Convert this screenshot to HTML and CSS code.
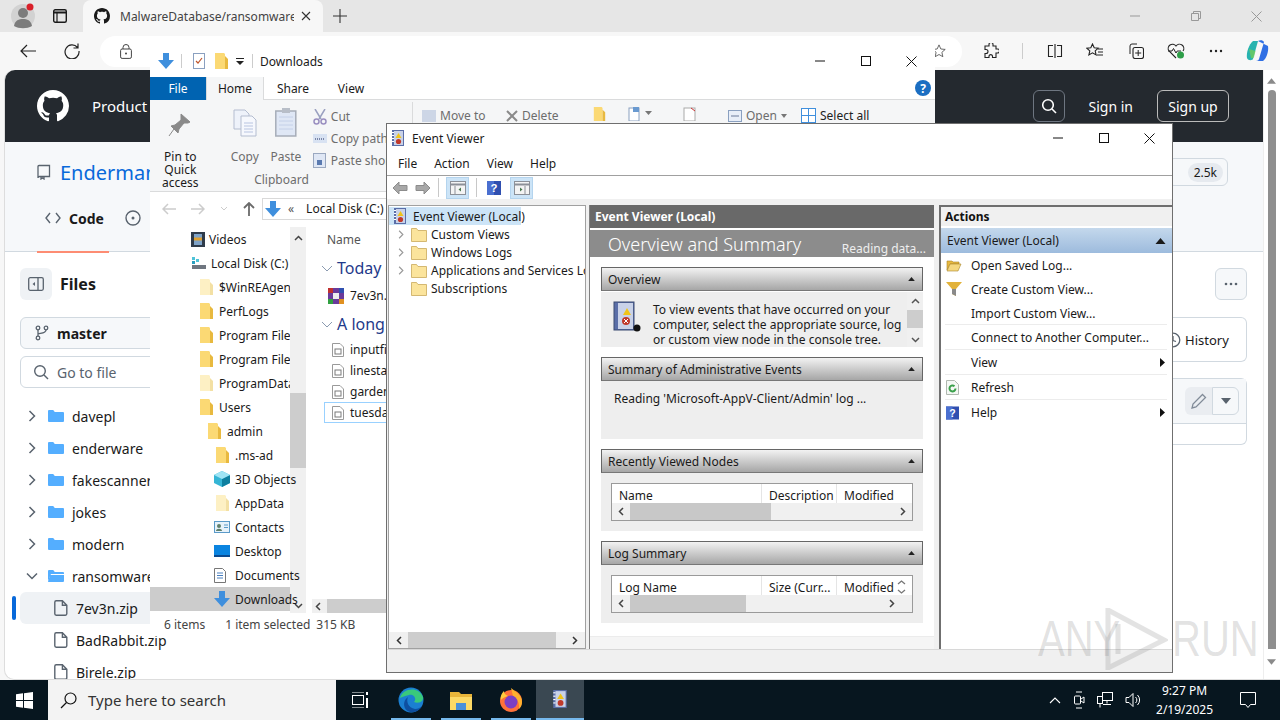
FILE: index.html
```html
<!DOCTYPE html>
<html>
<head>
  <title>Event Viewer</title>
  <link rel="stylesheet" href="styles.css">
</head>

<body>
  <svg class="sprite" width="0" height="0">
    <symbol id="gh" viewBox="0 0 16 16"><path fill="currentColor" d="M8 0C3.58 0 0 3.58 0 8c0 3.54 2.29 6.53 5.47 7.59.4.07.55-.17.55-.38 0-.19-.01-.82-.01-1.49-2.01.37-2.53-.49-2.69-.94-.09-.23-.48-.94-.82-1.13-.28-.15-.68-.52-.01-.53.63-.01 1.08.58 1.23.82.72 1.21 1.87.87 2.33.66.07-.52.28-.87.51-1.07-1.78-.2-3.64-.89-3.64-3.95 0-.87.31-1.59.82-2.15-.08-.2-.36-1.02.08-2.12 0 0 .67-.21 2.2.82.64-.18 1.32-.27 2-.27.68 0 1.36.09 2 .27 1.53-1.04 2.2-.82 2.2-.82.44 1.1.16 1.92.08 2.12.51.56.82 1.27.82 2.15 0 3.07-1.87 3.75-3.65 3.95.29.25.54.73.54 1.48 0 1.07-.01 1.93-.01 2.2 0 .21.15.46.55.38A8.013 8.013 0 0016 8c0-4.42-3.58-8-8-8z"/></symbol>
    <symbol id="bluefolder" viewBox="0 0 16 16"><path fill="#54aeff" d="M0 3a1 1 0 0 1 1-1h4.2l1.6 2H15a1 1 0 0 1 1 1v8a1 1 0 0 1-1 1H1a1 1 0 0 1-1-1z"/></symbol>
    <symbol id="openfolder" viewBox="0 0 16 16"><path fill="#54aeff" d="M0 3a1 1 0 0 1 1-1h4.2l1.6 2H15a1 1 0 0 1 1 1v1H3L0 13z"/><path fill="#54aeff" d="M2 7h14v6a1 1 0 0 1-1 1H1a1 1 0 0 1-1-.5z"/></symbol>
    <symbol id="ghfile" viewBox="0 0 14 16"><path fill="none" stroke="#59636e" stroke-width="1.4" d="M2.2.8h6.2l4.4 4.4v8.6a1.4 1.4 0 0 1-1.4 1.4H2.2A1.4 1.4 0 0 1 .8 13.8V2.2A1.4 1.4 0 0 1 2.2.8zM8.4.8v4.4h4.4"/></symbol>
    <symbol id="ydir" viewBox="0 0 13 16"><path fill="#fbd974" d="M0 0h9l1 1v15H0z"/><path fill="#e8b93f" d="M10 3l3 3v10h-3z"/></symbol>
    <symbol id="ydirpale" viewBox="0 0 13 16"><path fill="#fdf0c4" d="M0 0h9l1 1v15H0z"/><path fill="#f3e0a4" d="M10 3l3 3v10h-3z"/></symbol>
    <symbol id="dl" viewBox="0 0 16 16"><path fill="#3f8fdd" d="M5 0h6v7h5l-8 9-8-9h5z"/></symbol>
    <symbol id="ev" viewBox="0 0 16 16"><rect x="2" y="0" width="12" height="16" fill="#5a6ea8"/><rect x="4" y="1" width="9" height="14" fill="#c9d2e8"/><path fill="#f0c419" d="M8.5 3l3 5h-6z"/><circle cx="8.5" cy="11.5" r="2.6" fill="#c0392b"/><rect x="2" y="2" width="2" height="1" fill="#fff"/><rect x="2" y="5" width="2" height="1" fill="#fff"/><rect x="2" y="8" width="2" height="1" fill="#fff"/><rect x="2" y="11" width="2" height="1" fill="#fff"/></symbol>
    <symbol id="help" viewBox="0 0 16 16"><rect width="16" height="16" fill="#2f4fb0"/><rect width="8" height="16" fill="#4a6fd0"/><text x="8" y="13" text-anchor="middle" fill="#fff" font-size="13" font-weight="700" font-family="Liberation Sans">?</text></symbol>
    <symbol id="nodefolder" viewBox="0 0 16 16"><path fill="#fbe49c" stroke="#c9a95a" stroke-width=".8" d="M.5 2.5h5l1.5 2h8.500v11H.5z"/></symbol>
    <symbol id="rowdoc" viewBox="0 0 12 14"><path fill="#fff" stroke="#9a9a9a" d="M.5.5h7.500l3.500 3.500v9.500H.5z"/><rect x="3" y="6" width="6" height="5" fill="#fff" stroke="#7a7a7a"/></symbol>
    <symbol id="tri" viewBox="0 0 10 6"><path fill="currentColor" d="M5 0l5 6H0z"/></symbol>
    <symbol id="chev" viewBox="0 0 8 12"><path fill="none" stroke="currentColor" stroke-width="1.500" d="M1.500 1l5 5-5 5"/></symbol>
  </svg>

  <div class="browser">
    <div class="tabstrip">
      <div class="profile">
        <svg width="26" height="26" viewBox="0 0 26 26"><circle cx="13" cy="13" r="12" fill="#d2d2d2"/><circle cx="13" cy="10" r="5" fill="#7c7c7c"/><path fill="#7c7c7c" d="M4 23c1-6 5-7 9-7s8 1 9 7c-5 3-13 3-18 0z"/><circle cx="20" cy="4" r="3.500" fill="#d9202a"/></svg>
      </div>
      <svg class="tablist" width="14" height="14" viewBox="0 0 14 14"><rect x=".7" y=".7" width="12.600" height="12.600" rx="1.500" fill="none" stroke="#1a1a1a" stroke-width="1.400"/><path d="M.7 3.500h12.600" stroke="#1a1a1a" stroke-width="2"/><path d="M4 3v10" stroke="#1a1a1a" stroke-width="1.200"/></svg>
      <div class="tab">
        <svg class="tab-gh" width="16" height="16"><use href="#gh"/></svg>
        <span class="tab-title">MalwareDatabase/ransomwares/</span>
        <svg width="10" height="10" viewBox="0 0 10 10"><path d="M1 1l8 8M9 1l-8 8" stroke="#333" stroke-width="1.100"/></svg>
      </div>
      <svg class="newtab" width="14" height="14" viewBox="0 0 14 14"><path d="M7 0v14M0 7h14" stroke="#333" stroke-width="1.100"/></svg>
      <div class="winbtns">
        <svg width="10" height="10" viewBox="0 0 10 10"><path d="M0 5h10" stroke="#999"/></svg>
        <svg width="10" height="10" viewBox="0 0 10 10"><path d="M.5 2.500h7v7h-7zM2.500 2.500v-2h7v7h-2" fill="none" stroke="#999"/></svg>
        <svg width="11" height="11" viewBox="0 0 11 11"><path d="M.5.5l10 10M10.500.5l-10 10" stroke="#999"/></svg>
      </div>
    </div>

    <div class="toolbar">
      <svg class="tb-back" width="16" height="14" viewBox="0 0 16 14"><path d="M16 7H1M7 1L1 7l6 6" fill="none" stroke="#222" stroke-width="1.200"/></svg>
      <svg class="tb-reload" width="16" height="16" viewBox="0 0 16 16"><path d="M13.500 4.500A7 7 0 1 0 15 8M14 .5v4.500H9.500" fill="none" stroke="#222" stroke-width="1.200"/></svg>
      <div class="addressbar">
        <svg width="12" height="15" viewBox="0 0 12 15"><rect x=".6" y="5" width="10.800" height="9.400" rx="1.500" fill="none" stroke="#444"/><path d="M3 5V3.500a3 3 0 0 1 6 0V5" fill="none" stroke="#444"/><circle cx="6" cy="9.500" r="1" fill="#444"/></svg>
        <svg class="star" width="14" height="14" viewBox="0 0 16 16"><path d="M8 1l2.100 4.700 5 .5-3.800 3.300 1.100 5L8 12l-4.400 2.500 1.100-5L.9 6.200l5-.5z" fill="none" stroke="#555"/></svg>
      </div>
      <div class="tb-icons">
        <svg width="16" height="16" viewBox="0 0 16 16"><path d="M6 1.500a2 2 0 0 1 4 0V3h3v3h1.500a2 2 0 0 1 0 4H13v4.500H9.500V13a1.800 1.800 0 0 0-3.500 0v1.500H2V10.500h1a2 2 0 0 0 0-4H2V3h4z" fill="none" stroke="#222" stroke-width="1.100"/></svg>
        <i class="tb-sep"></i>
        <svg width="16" height="14" viewBox="0 0 16 14"><path d="M8 0v14M6 1.500H1.500v11H6M10 1.500h4.500v11H10" fill="none" stroke="#222" stroke-width="1.100"/></svg>
        <svg width="18" height="16" viewBox="0 0 18 16"><path d="M6.500 1l1.700 3.800 4 .4-3 2.700.9 4-3.600-2.100-3.600 2.100.9-4-3-2.700 4-.4z" fill="none" stroke="#222" stroke-width="1.100"/><path d="M12 6h5M12 9h5M11 12h6" stroke="#222"/></svg>
        <svg width="16" height="16" viewBox="0 0 16 16"><path d="M2 11V3a2 2 0 0 1 2-2h5" fill="none" stroke="#222"/><rect x="5" y="4.500" width="10.500" height="11" rx="2" fill="none" stroke="#222" stroke-width="1.100"/><path d="M10.200 7v6M7.200 10h6" stroke="#222"/></svg>
        <svg width="18" height="16" viewBox="0 0 18 16"><path d="M9 15L2 8a4 4 0 0 1 7-5 4 4 0 0 1 7 5" fill="none" stroke="#222" stroke-width="1.100"/><path d="M1 8h4l1.500-2.500L9 10l1.200-2H14" fill="none" stroke="#222"/><circle cx="13.500" cy="12" r="3.500" fill="#2e9e48"/></svg>
        <svg width="14" height="4" viewBox="0 0 14 4"><circle cx="2" cy="2" r="1.200" fill="#222"/><circle cx="7" cy="2" r="1.200" fill="#222"/><circle cx="12" cy="2" r="1.200" fill="#222"/></svg>
        <svg width="24" height="24" viewBox="0 0 24 24"><path fill="#27b3b0" d="M7 2h5L7 20c-.5 1.500-5 2-6-1-1-5 2-14 6-17z"/><path fill="#2f6fe4" d="M12 2c2-1 5-1 6 1l-5 17c-.5 2-3 2-4 2h8c3-2 6-9 5-15z"/><path fill="#7ad04f" d="M3 10l2 9c2 1 3-1 3-1l1.500-6z" opacity=".7"/></svg>
      </div>
    </div>

    <div class="ghpage">
      <div class="ghmain">
        <div class="ghheader">
          <svg class="gh-logo" width="32" height="32"><use href="#gh"/></svg>
          <span class="gh-product">Product</span>
          <div class="gh-right">
            <span class="gh-search"><svg width="16" height="16" viewBox="0 0 16 16"><circle cx="7" cy="7" r="5.300" fill="none" stroke="#fff" stroke-width="1.600"/><path d="M11 11l4 4" stroke="#fff" stroke-width="1.600"/></svg></span>
            <span class="gh-signin">Sign in</span>
            <span class="gh-signup">Sign up</span>
          </div>
        </div>

        <div class="repohead">
          <div class="repo-title">
            <svg width="16" height="16" viewBox="0 0 16 16"><path d="M3 1.500h10.500v11H3.500A1.500 1.500 0 0 0 2 14V2.500a1 1 0 0 1 1-1zM5 12.500V15l1.500-1L8 15v-2.500" fill="none" stroke="#59636e" stroke-width="1.300"/></svg>
            <span class="repo-name">Enderman</span>
            <span class="star-btn"><b>2.5k</b></span>
          </div>
          <div class="repo-tabs">
            <div class="code-tab">
              <svg width="16" height="12" viewBox="0 0 16 12"><path d="M5 1L1 6l4 5M11 1l4 5-4 5" fill="none" stroke="#59636e" stroke-width="1.400"/></svg>
              <b>Code</b>
            </div>
            <svg class="issue-ico" width="16" height="16" viewBox="0 0 16 16"><circle cx="8" cy="8" r="7" fill="none" stroke="#59636e" stroke-width="1.400"/><circle cx="8" cy="8" r="1.500" fill="#59636e"/></svg>
          </div>
        </div>

        <div class="ghbody">
          <div class="filetree">
            <div class="files-head">
              <span class="panel-btn"><svg width="16" height="16" viewBox="0 0 16 16"><rect x=".7" y="1.700" width="14.600" height="12.600" rx="1.500" fill="none" stroke="#59636e" stroke-width="1.300"/><path d="M10 2v12" stroke="#59636e" stroke-width="1.300"/><path d="M7 6v4L4.500 8z" fill="#59636e"/></svg></span>
              <b>Files</b>
            </div>
            <div class="branch">
              <svg width="14" height="16" viewBox="0 0 14 16"><circle cx="3" cy="3" r="1.800" fill="none" stroke="#59636e" stroke-width="1.300"/><circle cx="11" cy="3" r="1.800" fill="none" stroke="#59636e" stroke-width="1.300"/><circle cx="3" cy="13" r="1.800" fill="none" stroke="#59636e" stroke-width="1.300"/><path d="M3 5v6M11 5c0 3-4 3-8 4" fill="none" stroke="#59636e" stroke-width="1.300"/></svg>
              <b>master</b>
            </div>
            <div class="gotofile">
              <svg width="16" height="16" viewBox="0 0 16 16"><circle cx="7" cy="7" r="5.300" fill="none" stroke="#59636e" stroke-width="1.400"/><path d="M11 11l4 4" stroke="#59636e" stroke-width="1.400"/></svg>
              <span>Go to file</span>
            </div>
            <div class="tree-row"><svg class="tree-chev" width="8" height="12"><use href="#chev"/></svg><svg width="16" height="16"><use href="#bluefolder"/></svg><span>davepl</span></div>
            <div class="tree-row"><svg class="tree-chev" width="8" height="12"><use href="#chev"/></svg><svg width="16" height="16"><use href="#bluefolder"/></svg><span>enderware</span></div>
            <div class="tree-row"><svg class="tree-chev" width="8" height="12"><use href="#chev"/></svg><svg width="16" height="16"><use href="#bluefolder"/></svg><span>fakescanners</span></div>
            <div class="tree-row"><svg class="tree-chev" width="8" height="12"><use href="#chev"/></svg><svg width="16" height="16"><use href="#bluefolder"/></svg><span>jokes</span></div>
            <div class="tree-row"><svg class="tree-chev" width="8" height="12"><use href="#chev"/></svg><svg width="16" height="16"><use href="#bluefolder"/></svg><span>modern</span></div>
            <div class="tree-row"><svg class="tree-chev down" width="8" height="12"><use href="#chev"/></svg><svg width="16" height="16"><use href="#openfolder"/></svg><span>ransomwares</span></div>
            <div class="tree-row file current"><svg width="14" height="16"><use href="#ghfile"/></svg><span>7ev3n.zip</span></div>
            <div class="tree-row file"><svg width="14" height="16"><use href="#ghfile"/></svg><span>BadRabbit.zip</span></div>
            <div class="tree-row file"><svg width="14" height="16"><use href="#ghfile"/></svg><span>Birele.zip</span></div>
          </div>
          <div class="ghside">
            <span class="more-btn"><svg width="14" height="4" viewBox="0 0 14 4"><circle cx="2" cy="2" r="1.300" fill="#59636e"/><circle cx="7" cy="2" r="1.300" fill="#59636e"/><circle cx="12" cy="2" r="1.300" fill="#59636e"/></svg></span>
            <div class="history-box">
              <svg width="16" height="16" viewBox="0 0 16 16"><circle cx="8" cy="8" r="6.800" fill="none" stroke="#59636e" stroke-width="1.300"/><path d="M8 4v4.500l3 1" fill="none" stroke="#59636e" stroke-width="1.300"/></svg>
              <span>History</span>
            </div>
            <div class="file-box">
              <div class="file-actions">
                <span class="edit-btn"><svg width="16" height="16" viewBox="0 0 16 16"><path d="M11.500 1.500l3 3L5 14l-4 1 1-4z" fill="none" stroke="#818b98" stroke-width="1.300"/></svg></span>
                <span class="edit-drop"><svg width="10" height="6"><use href="#tri" transform="rotate(180 5 3)"/></svg></span>
              </div>
            </div>
          </div>
        </div>
      </div>
      <div class="pagescroll">
        <svg class="arrow-up" width="9" height="6"><use href="#tri"/></svg>
        <div class="pagethumb"></div>
        <svg class="arrow-down" width="9" height="6"><use href="#tri" transform="rotate(180 4.500 3)"/></svg>
      </div>
    </div>
  </div>

  <!-- file explorer window -->
  <div class="explorer">
    <div class="ex-title">
      <svg width="16" height="16"><use href="#dl"/></svg>
      <i class="ex-sep"></i>
      <svg width="12" height="16" viewBox="0 0 12 16"><rect x=".5" y=".5" width="11" height="15" fill="#fff" stroke="#8aa0c0"/><path d="M3 8l2 2 4-5" fill="none" stroke="#c0562a" stroke-width="1.200"/></svg>
      <svg width="13" height="16"><use href="#ydir"/></svg>
      <svg class="ex-drop" width="8" height="7" viewBox="0 0 8 7"><path d="M0 0h8v1H0zM0 3h8L4 7z" fill="#222"/></svg>
      <i class="ex-sep"></i>
      <span>Downloads</span>
      <div class="ex-win">
        <svg width="10" height="10" viewBox="0 0 10 10"><path d="M0 5h10" stroke="#111"/></svg>
        <svg width="10" height="10" viewBox="0 0 10 10"><rect x=".5" y=".5" width="9" height="9" fill="none" stroke="#111"/></svg>
        <svg width="11" height="11" viewBox="0 0 11 11"><path d="M.5.5l10 10M10.500.5l-10 10" stroke="#111"/></svg>
      </div>
    </div>
    <div class="ex-tabs">
      <span class="ex-file">File</span>
      <span class="ex-home">Home</span>
      <span class="ex-tab">Share</span>
      <span class="ex-tab">View</span>
      <span class="ex-help">?</span>
    </div>
    <div class="ribbon">
      <div class="rb-group rb-clip">
        <div class="rb-items">
          <div class="rb-big rb-pin">
            <svg width="24" height="26" viewBox="0 0 24 26"><path d="M13 2l9 8-2 1-4 0-5 6-1 4-7-7 4-1 6-5 0-4zM6 17l-5 7" fill="#8a8a8a" stroke="#8a8a8a"/></svg>
            <span class="dark">Pin to Quick access</span>
          </div>
          <div class="rb-big rb-copy">
            <svg width="24" height="28" viewBox="0 0 24 28"><path d="M1 1h11l4 4v15H1z" fill="#eef2fa" stroke="#b4bdd0"/><path d="M8 7h11l4 4v16H8z" fill="#f6f8fd" stroke="#b4bdd0"/><path d="M11 14h9M11 17h9M11 20h9M11 23h9" stroke="#b8c4e0"/></svg>
            <span>Copy</span>
          </div>
          <div class="rb-big rb-paste">
            <svg width="22" height="29" viewBox="0 0 22 29"><rect x=".8" y="3" width="20" height="25" fill="#dfe7f5" stroke="#a6adb8" stroke-width="1.500"/><rect x="7" y="0" width="8" height="5" fill="#b8bec8"/><path d="M4 9h14M4 13h14M4 17h14M4 21h14" stroke="#c4d0e8"/></svg>
            <span>Paste</span>
          </div>
          <div class="rb-small">
            <div class="rb-line"><svg width="14" height="16" viewBox="0 0 14 16"><path d="M2 0l6 10M12 0L6 10" stroke="#9aa0c0" stroke-width="1.500"/><circle cx="3.500" cy="12.500" r="2.500" fill="none" stroke="#9a8fc0" stroke-width="1.500"/><circle cx="10.500" cy="12.500" r="2.500" fill="none" stroke="#9a8fc0" stroke-width="1.500"/></svg><span>Cut</span></div>
            <div class="rb-line"><svg width="14" height="9" viewBox="0 0 14 9"><rect width="14" height="9" fill="#d8e2f2"/><path d="M2 5h10" stroke="#7a86a8" stroke-dasharray="1 1" stroke-width="2"/></svg><span>Copy path</span></div>
            <div class="rb-line"><svg width="14" height="16" viewBox="0 0 14 16"><rect x=".5" y="1.500" width="12" height="14" fill="#dfe7f5" stroke="#9aa8c0"/><path d="M4 8h5v5H4z" fill="#5a7ab0"/></svg><span>Paste shortcut</span></div>
          </div>
        </div>
        <div class="rb-label">Clipboard</div>
      </div>
      <div class="rb-top">
        <span class="rb-mini rb-move"><i class="mini-ico"></i>Move to</span>
        <span class="rb-mini rb-del"><svg width="12" height="12" viewBox="0 0 12 12"><path d="M1 1l10 10M11 1L1 11" stroke="#8a8a8a" stroke-width="2"/></svg>Delete</span>
        <span class="rb-mini rb-newf"><svg width="13" height="14"><use href="#ydir"/></svg></span>
        <span class="rb-mini rb-newi"><svg width="24" height="14" viewBox="0 0 24 14"><rect x="1" y="1" width="10" height="13" fill="#fff" stroke="#8aa0c0"/><rect x="5" y="0" width="6" height="5" fill="#6a9ad0"/><path d="M17 4h7l-3.500 4z" fill="#777"/></svg></span>
        <span class="rb-mini rb-prop"><svg width="14" height="14" viewBox="0 0 14 14"><rect x="1" y="1" width="11" height="13" fill="#fff" stroke="#aaa"/><path d="M8 1l4 3" stroke="#c33"/></svg></span>
        <span class="rb-mini rb-open"><svg width="14" height="12" viewBox="0 0 14 12"><rect x=".5" y=".5" width="13" height="11" fill="#e8eef8" stroke="#8aa0c0"/><path d="M3 6h8" stroke="#6a7a9a"/></svg>Open<svg class="caret" width="6" height="4" viewBox="0 0 6 4"><path d="M0 0h6L3 4z" fill="#777"/></svg></span>
        <span class="rb-mini rb-sel"><svg width="15" height="15" viewBox="0 0 15 15"><rect x=".5" y=".5" width="14" height="14" fill="#fff" stroke="#3f8fdd"/><path d="M.5 7.500h14M7.500.5v14" stroke="#3f8fdd"/></svg>Select all</span>
      </div>
    </div>
    <div class="ex-nav">
      <svg class="nav-a" width="14" height="12" viewBox="0 0 14 12"><path d="M14 6H1M6 1L1 6l5 5" fill="none" stroke="#ccc" stroke-width="1.500"/></svg>
      <svg class="nav-a" width="14" height="12" viewBox="0 0 14 12"><path d="M0 6h13M8 1l5 5-5 5" fill="none" stroke="#ccc" stroke-width="1.500"/></svg>
      <svg class="nav-a" width="8" height="5" viewBox="0 0 8 5"><path d="M1 1l3 3 3-3" fill="none" stroke="#ccc"/></svg>
      <svg class="nav-a" width="12" height="14" viewBox="0 0 12 14"><path d="M6 14V2M1 6l5-5 5 5" fill="none" stroke="#6b6b6b" stroke-width="1.800"/></svg>
      <div class="ex-addr">
        <svg width="16" height="16"><use href="#dl"/></svg>
        <span class="gt">&laquo;</span>
        <span>Local Disk (C:)</span>
      </div>
    </div>
    <div class="ex-main">
      <div class="ex-tree">
        <div class="ex-row l0"><svg width="14" height="15" viewBox="0 0 14 15"><rect width="14" height="15" fill="#2f3b4a"/><rect x="3" y="2" width="8" height="11" fill="#7fa3c8"/><path d="M3 7h8" stroke="#e0a030" stroke-width="3"/></svg><span>Videos</span></div>
        <div class="ex-row l0"><svg width="16" height="14" viewBox="0 0 16 14"><rect x="1" y="9" width="14" height="4" fill="#6f7680"/><rect x="1" y="1" width="3" height="3" fill="#4fc3d8"/><rect x="5" y="3" width="3" height="3" fill="#4fc3d8"/><rect x="1" y="5" width="3" height="3" fill="#2aa0c0"/></svg><span>Local Disk (C:)</span></div>
        <div class="ex-row l1"><svg width="13" height="16"><use href="#ydirpale"/></svg><span>$WinREAgent</span></div>
        <div class="ex-row l1"><svg width="13" height="16"><use href="#ydir"/></svg><span>PerfLogs</span></div>
        <div class="ex-row l1"><svg width="13" height="16"><use href="#ydir"/></svg><span>Program Files</span></div>
        <div class="ex-row l1"><svg width="13" height="16"><use href="#ydir"/></svg><span>Program Files (x86)</span></div>
        <div class="ex-row l1"><svg width="13" height="16"><use href="#ydirpale"/></svg><span>ProgramData</span></div>
        <div class="ex-row l1"><svg width="13" height="16"><use href="#ydir"/></svg><span>Users</span></div>
        <div class="ex-row l2"><svg width="13" height="16"><use href="#ydir"/></svg><span>admin</span></div>
        <div class="ex-row l3"><svg width="13" height="16"><use href="#ydir"/></svg><span>.ms-ad</span></div>
        <div class="ex-row l3b"><svg width="16" height="16" viewBox="0 0 16 16"><path d="M8 0l8 4v8l-8 4-8-4V4z" fill="#35b5d5"/><path d="M8 8v8l8-4V4z" fill="#0e7f9f"/><path d="M8 0l8 4-8 4-8-4z" fill="#9fe4f4"/></svg><span>3D Objects</span></div>
        <div class="ex-row l3"><svg width="13" height="16"><use href="#ydirpale"/></svg><span>AppData</span></div>
        <div class="ex-row l3b"><svg width="16" height="12" viewBox="0 0 16 12"><rect x=".5" y=".5" width="15" height="11" fill="#e6f2fb" stroke="#5a9ac8"/><circle cx="5" cy="5" r="2" fill="#5f7f6a"/><path d="M2 10c0-3 6-3 6 0z" fill="#5f7f6a"/><path d="M10 4h4M10 6.500h4" stroke="#5a9ac8"/></svg><span>Contacts</span></div>
        <div class="ex-row l3b"><svg width="16" height="12" viewBox="0 0 16 12"><rect width="16" height="11" fill="#0a84e0"/><rect y="10" width="16" height="2" fill="#0a4a90"/></svg><span>Desktop</span></div>
        <div class="ex-row l3b"><svg width="12" height="15" viewBox="0 0 12 15"><path d="M.5.5h8l3 3v11H.5z" fill="#fff" stroke="#777"/><path d="M3 5h6M3 7.500h6M3 10h6" stroke="#4a80c0"/></svg><span>Documents</span></div>
        <div class="ex-row l3b selected"><svg width="16" height="16"><use href="#dl"/></svg><span>Downloads</span></div>
      </div>
      <div class="ex-vscroll">
        <svg width="9" height="6" viewBox="0 0 9 6"><path d="M1 5l3.500-3.500L8 5" fill="none" stroke="#444" stroke-width="1.500"/></svg>
        <div class="ex-thumb"></div>
        <svg width="9" height="6" viewBox="0 0 9 6"><path d="M1 1l3.500 3.500L8 1" fill="none" stroke="#444" stroke-width="1.500"/></svg>
      </div>
      <div class="ex-list">
        <div class="col-name">Name</div>
        <div class="grp"><svg width="12" height="7" viewBox="0 0 12 7"><path d="M1 1l5 5 5-5" fill="none" stroke="#8a9ab0"/></svg><span>Today (1)</span></div>
        <div class="item zipitem"><svg width="16" height="16" viewBox="0 0 16 16"><rect width="16" height="16" fill="#6a3a9a"/><rect y="0" width="5" height="5" fill="#c03030"/><rect x="11" y="0" width="5" height="5" fill="#3050b0"/><rect y="11" width="5" height="5" fill="#30a040"/><rect x="11" y="11" width="5" height="5" fill="#e09020"/><rect x="5" y="5" width="6" height="6" fill="#eee"/></svg><span>7ev3n.zip</span></div>
        <div class="grp"><svg width="12" height="7" viewBox="0 0 12 7"><path d="M1 1l5 5 5-5" fill="none" stroke="#8a9ab0"/></svg><span>A long time ago</span></div>
        <div class="item"><svg width="12" height="14"><use href="#rowdoc"/></svg><span>inputfiles.dat</span></div>
        <div class="item"><svg width="12" height="14"><use href="#rowdoc"/></svg><span>linestaff.dat</span></div>
        <div class="item"><svg width="12" height="14"><use href="#rowdoc"/></svg><span>gardenparty.dat</span></div>
        <div class="item picked"><svg width="12" height="14"><use href="#rowdoc"/></svg><span>tuesday.dat</span></div>
        <div class="ex-hscroll">
          <svg width="6" height="9" viewBox="0 0 6 9"><path d="M5 1L1.500 4.500 5 8" fill="none" stroke="#444" stroke-width="1.500"/></svg>
          <div class="ex-hthumb"></div>
        </div>
      </div>
    </div>
    <div class="ex-status">
      <span class="st-a">6 items</span>
      <span class="st-b">1 item selected</span>
      <span class="st-c">315 KB</span>
    </div>
  </div>

  <!-- event viewer window -->
  <div class="evwin">
    <div class="ev-title">
      <svg width="16" height="16"><use href="#ev"/></svg>
      <span>Event Viewer</span>
      <div class="ev-win">
        <svg width="10" height="10" viewBox="0 0 10 10"><path d="M0 5h10" stroke="#111"/></svg>
        <svg width="10" height="10" viewBox="0 0 10 10"><rect x=".5" y=".5" width="9" height="9" fill="none" stroke="#111"/></svg>
        <svg width="11" height="11" viewBox="0 0 11 11"><path d="M.5.5l10 10M10.500.5l-10 10" stroke="#111"/></svg>
      </div>
    </div>
    <div class="ev-menu">
      <span>File</span><span>Action</span><span>View</span><span>Help</span>
    </div>
    <div class="ev-tools">
      <svg class="ev-arrow" width="16" height="14" viewBox="0 0 16 14"><path d="M7 1L1 7l6 6V9.500h8v-5H7z" fill="#a8a8a8" stroke="#8c8c8c"/></svg>
      <svg class="ev-arrow" width="16" height="14" viewBox="0 0 16 14"><path d="M9 1l6 6-6 6V9.500H1v-5h8z" fill="#a8a8a8" stroke="#8c8c8c"/></svg>
      <i class="tool-sep"></i>
      <span class="tool-on"><svg width="16" height="14" viewBox="0 0 16 14"><rect x=".5" y=".5" width="15" height="13" fill="#f4f4f4" stroke="#8c9098"/><path d="M1 3.500h14" stroke="#8c9098" stroke-width="2"/><path d="M5 5v8" stroke="#8c9098"/><path d="M11 6.500v4L8.500 8.500z" fill="#4a7a50"/></svg></span>
      <i class="tool-sep"></i>
      <svg class="tool-help" width="14" height="16"><use href="#help"/></svg>
      <span class="tool-on"><svg width="16" height="14" viewBox="0 0 16 14"><rect x=".5" y=".5" width="15" height="13" fill="#f4f4f4" stroke="#8c9098"/><path d="M1 3.500h14" stroke="#8c9098" stroke-width="2"/><path d="M11 5v8" stroke="#8c9098"/><path d="M6 6.500v4l2.500-2z" fill="#4a7a50"/></svg></span>
    </div>
    <div class="ev-panes">
      <div class="ev-left">
        <div class="node-list">
          <div class="node root"><svg width="16" height="16"><use href="#ev"/></svg><span>Event Viewer (Local)</span></div>
          <div class="node"><svg class="node-chev" width="6" height="9"><use href="#chev"/></svg><svg width="16" height="16"><use href="#nodefolder"/></svg><span>Custom Views</span></div>
          <div class="node"><svg class="node-chev" width="6" height="9"><use href="#chev"/></svg><svg width="16" height="16"><use href="#nodefolder"/></svg><span>Windows Logs</span></div>
          <div class="node"><svg class="node-chev" width="6" height="9"><use href="#chev"/></svg><svg width="16" height="16"><use href="#nodefolder"/></svg><span>Applications and Services Logs</span></div>
          <div class="node plain"><svg width="16" height="16"><use href="#nodefolder"/></svg><span>Subscriptions</span></div>
        </div>
        <div class="left-scroll">
          <svg width="6" height="9" viewBox="0 0 6 9"><path d="M5 1L1.500 4.500 5 8" fill="none" stroke="#333" stroke-width="1.500"/></svg>
          <div class="left-thumb"></div>
          <svg width="6" height="9" viewBox="0 0 6 9"><path d="M1 1l3.500 3.500L1 8" fill="none" stroke="#333" stroke-width="1.500"/></svg>
        </div>
      </div>

      <div class="ev-mid">
        <div class="mid-head">Event Viewer (Local)</div>
        <div class="mid-band">
          <span class="band-title">Overview and Summary</span>
          <span class="band-note">Reading data...</span>
        </div>
        <div class="mid-body">
          <div class="sec-head"><span>Overview</span><svg width="7" height="4"><use href="#tri"/></svg></div>
          <div class="sec-body overview">
            <svg class="ov-ico" width="28" height="32" viewBox="0 0 28 32"><rect x="1" y="1" width="20" height="28" fill="#5a6ea8" stroke="#3a4a70"/><rect x="5" y="2" width="15" height="26" fill="#c9d2e8"/><path d="M14 7l4 7h-8z" fill="#f0c419"/><circle cx="13" cy="20" r="4" fill="#c0392b"/><path d="M11 18l4 4M15 18l-4 4" stroke="#fff"/><circle cx="24" cy="27" r="3.500" fill="#111"/></svg>
            <p>To view events that have occurred on your computer, select the appropriate source, log or custom view node in the console tree.</p>
            <div class="ov-scroll">
              <svg width="9" height="6" viewBox="0 0 9 6"><path d="M1 5l3.500-3.500L8 5" fill="none" stroke="#555" stroke-width="1.500"/></svg>
              <div class="ov-thumb"></div>
              <svg width="9" height="6" viewBox="0 0 9 6"><path d="M1 1l3.500 3.500L8 1" fill="none" stroke="#555" stroke-width="1.500"/></svg>
            </div>
          </div>
          <div class="sec-head"><span>Summary of Administrative Events</span><svg width="7" height="4"><use href="#tri"/></svg></div>
          <div class="sec-body summary">Reading 'Microsoft-AppV-Client/Admin' log ...</div>
          <div class="sec-head"><span>Recently Viewed Nodes</span><svg width="7" height="4"><use href="#tri"/></svg></div>
          <div class="sec-body listwrap">
            <div class="lv">
              <div class="lv-cols"><span class="c1">Name</span><span class="c2">Description</span><span class="c3">Modified</span></div>
              <div class="lv-scroll">
                <svg width="6" height="9" viewBox="0 0 6 9"><path d="M5 1L1.500 4.500 5 8" fill="none" stroke="#444" stroke-width="1.500"/></svg>
                <div class="lv-thumb wide"></div>
                <svg class="lv-right" width="6" height="9" viewBox="0 0 6 9"><path d="M1 1l3.500 3.500L1 8" fill="none" stroke="#444" stroke-width="1.500"/></svg>
              </div>
            </div>
          </div>
          <div class="sec-head"><span>Log Summary</span><svg width="7" height="4"><use href="#tri"/></svg></div>
          <div class="sec-body listwrap">
            <div class="lv">
              <div class="lv-cols"><span class="c1">Log Name</span><span class="c2">Size (Curr...</span><span class="c3">Modified</span>
                <svg class="lv-spin" width="9" height="14" viewBox="0 0 9 14"><path d="M1 4l3.500-3L8 4M1 10l3.500 3L8 10" fill="none" stroke="#777" stroke-width="1.300"/></svg>
              </div>
              <div class="lv-scroll">
                <svg width="6" height="9" viewBox="0 0 6 9"><path d="M5 1L1.500 4.500 5 8" fill="none" stroke="#444" stroke-width="1.500"/></svg>
                <div class="lv-thumb narrow"></div>
                <svg class="lv-right short" width="6" height="9" viewBox="0 0 6 9"><path d="M1 1l3.500 3.500L1 8" fill="none" stroke="#444" stroke-width="1.500"/></svg>
              </div>
            </div>
          </div>
        </div>
        <div class="mid-foot"></div>
      </div>

      <div class="ev-right">
        <div class="act-title">Actions</div>
        <div class="act-head"><span>Event Viewer (Local)</span><svg width="11" height="6"><use href="#tri"/></svg></div>
        <div class="act tall"><svg width="16" height="14" viewBox="0 0 16 14"><path d="M1 3h5l1 1h6v2H4L1 12z" fill="#e8b93f" stroke="#a88428" stroke-width=".6"/><path d="M4 6h11l-3 7H1z" fill="#f5d77e" stroke="#a88428" stroke-width=".6"/></svg><span>Open Saved Log...</span></div>
        <div class="act tall"><svg width="16" height="16" viewBox="0 0 16 16"><path d="M0 1h16L10 8v7l-4-2V8z" fill="#e2b23a"/><path d="M6 8h4v7l-4-2z" fill="#8a8a8a"/></svg><span>Create Custom View...</span></div>
        <div class="act tall line"><i class="act-blank"></i><span>Import Custom View...</span></div>
        <div class="act line"><i class="act-blank"></i><span>Connect to Another Computer...</span></div>
        <div class="act line"><i class="act-blank"></i><span>View</span><svg class="sub" width="5" height="9" viewBox="0 0 5 9"><path d="M0 0l5 4.500L0 9z" fill="#111"/></svg></div>
        <div class="act line"><svg width="13" height="15" viewBox="0 0 13 15"><path d="M.5.5h8l4 4v10H.5z" fill="#f4f8f4" stroke="#b0b8b0"/><path d="M9.500 8.500a3 3 0 1 1-1-2.300" fill="none" stroke="#3aa04a" stroke-width="2"/></svg><span>Refresh</span></div>
        <div class="act"><svg width="13" height="16"><use href="#help"/></svg><span>Help</span><svg class="sub" width="5" height="9" viewBox="0 0 5 9"><path d="M0 0l5 4.500L0 9z" fill="#111"/></svg></div>
      </div>
    </div>
    <div class="ev-status"></div>
  </div>

  <div class="watermark">
    <span>ANY</span>
    <svg width="64" height="62" viewBox="0 0 64 62"><path d="M4 2l56 30L4 60zM14 16v30" fill="none" stroke="#777" stroke-width="5"/></svg>
    <span>RUN</span>
  </div>

  <div class="taskbar">
    <div class="start"><svg width="17" height="17" viewBox="0 0 17 17"><path d="M0 2.300l7-1v6.700H0zM8 1.200L17 0v8H8zM0 9h7v6.700l-7-1zM8 9h9v8l-9-1.200z" fill="#fff"/></svg></div>
    <div class="searchbox">
      <svg width="17" height="17" viewBox="0 0 17 17"><circle cx="10.500" cy="6.500" r="5.500" fill="none" stroke="#111" stroke-width="1.200"/><path d="M6.500 10.500L1 16" stroke="#111" stroke-width="1.300"/></svg>
      <span>Type here to search</span>
    </div>
    <div class="task-btn"><svg width="18" height="16" viewBox="0 0 18 16"><path d="M1 0h12M1 16h12" stroke="#fff"/><rect x="1.500" y="3.500" width="11" height="9" fill="none" stroke="#fff"/><path d="M16 0v3M16 6v10" stroke="#fff" stroke-width="2"/></svg></div>
    <div class="task-btn app"><svg width="26" height="26" viewBox="0 0 26 26"><circle cx="13" cy="13" r="12.500" fill="#1b7fd1"/><path d="M2 11C4 2 20-2 25 10c1 5-5 7-9 5 3-3 0-8-5-7-4 1-7 2-9 3z" fill="#39c97c"/><path d="M12 25c-7-2-8-11-2-15-2 4 0 11 7 12 3 0 5-1 7-3-2 4-7 7-12 6z" fill="#0e4fa0"/></svg></div>
    <div class="task-btn app"><svg width="24" height="22" viewBox="0 0 24 22"><path d="M1 3h9l2 2h11v4H1z" fill="#e8b53a"/><rect x="1" y="8" width="22" height="13" fill="#fcd966"/><rect x="7" y="14" width="10" height="7" fill="#4a90d9"/></svg></div>
    <div class="task-btn app"><svg width="26" height="26" viewBox="0 0 26 26"><circle cx="13" cy="14" r="11" fill="#ff7139"/><path d="M13 1c5 4 11 7 11 14 0 3-1 5-3 7 1-8-3-10-6-13z" fill="#ffb02e"/><circle cx="13" cy="15" r="6.500" fill="#7b3fc4"/><path d="M3 13c-1-4 1-7 3-9 0 3 2 4 4 5-3 1-6 2-7 4z" fill="#ffcb3d"/></svg></div>
    <div class="task-btn active"><svg width="18" height="26"><use href="#ev"/></svg></div>
    <div class="tray">
      <svg width="12" height="7" viewBox="0 0 12 7"><path d="M1 6l5-5 5 5" fill="none" stroke="#fff" stroke-width="1.100"/></svg>
      <svg width="12" height="18" viewBox="0 0 12 18"><path d="M3 1h6M3 17h6" stroke="#fff"/><rect x="1.500" y="5" width="6" height="8" rx="1" fill="none" stroke="#fff"/><path d="M8 8l3-2v6l-3-2" fill="none" stroke="#fff"/></svg>
      <svg width="16" height="16" viewBox="0 0 16 16"><rect x="5.500" y=".5" width="10" height="8" fill="none" stroke="#fff"/><rect x=".5" y="4.500" width="5" height="7" fill="#07161f" stroke="#fff"/><path d="M10 8.500v3M6 12.500h8M3 11.500v4" stroke="#fff"/></svg>
      <svg width="17" height="16" viewBox="0 0 17 16"><path d="M1 5.500h3l4-4v13l-4-4H1z" fill="none" stroke="#fff"/><path d="M10.500 5a4 4 0 0 1 0 6M12.500 3a7 7 0 0 1 0 10" fill="none" stroke="#fff"/></svg>
      <div class="clock"><span>9:27 PM</span><span>2/19/2025</span></div>
      <svg class="notif" width="16" height="16" viewBox="0 0 16 16"><path d="M.5.5h15v12h-5L8 15.500 5.500 12.500h-5z" fill="none" stroke="#fff"/></svg>
    </div>
  </div>
</body>
</html>
```
FILE: styles.css
```css
* {
  box-sizing: border-box;
}
html, body {
  margin: 0;
  padding: 0;
  width: 1280px;
  height: 720px;
  overflow: hidden;
}
body {
  position: relative;
  font-family: "Noto Sans", "Open Sans", sans-serif;
  font-size: 12px;
  color: #1a1a1a;
  background: #f7f7f7;
}
svg {
  flex: none;
  display: block;
}
i {
  display: block;
}
.sprite {
  position: absolute;
}

/* browser */
.browser {
  height: 680px;
  display: flex;
  flex-direction: column;
}
.tabstrip {
  height: 32px;
  background: #e6e6e6;
  display: flex;
  align-items: center;
  flex: none;
}
.profile {
  margin-left: 10px;
  width: 26px;
}
.tablist {
  margin-left: 17px;
}
.tab {
  margin-left: 16px;
  width: 240px;
  height: 32px;
  margin-top: 0;
  background: #f7f7f7;
  border-radius: 8px 8px 0 0;
  display: flex;
  align-items: center;
  padding: 0 12px 0 11px;
}
.tab-title {
  margin-left: 10px;
  width: 175px;
  white-space: nowrap;
  overflow: hidden;
  color: #444;
  margin-right: 7px;
}
.newtab {
  margin-left: 10px;
}
.winbtns {
  margin-left: auto;
  width: 132px;
  margin-right: 18px;
  display: flex;
  justify-content: space-between;
  align-items: center;
}
.toolbar {
  height: 38px;
  flex: none;
  display: flex;
  align-items: center;
  background: #f7f7f7;
}
.tb-back {
  margin-left: 20px;
}
.tb-reload {
  margin-left: 28px;
}
.addressbar {
  margin-left: 20px;
  width: 862px;
  height: 31px;
  background: #fff;
  border-radius: 16px;
  display: flex;
  align-items: center;
  justify-content: space-between;
  padding: 0 16px 0 20px;
}
.tb-icons {
  margin-left: 21px;
  display: flex;
  align-items: center;
  width: 287px;
  justify-content: space-between;
}
.tb-sep {
  width: 1px;
  height: 16px;
  background: #ccc;
}

/* github page */
.ghpage {
  flex: 1;
  display: flex;
  margin-left: 4px;
  min-height: 0;
  background: #fff;
  border-radius: 10px 0 0 10px;
  border-bottom: 1px solid #ddd;
  border-left: 1px solid #ddd;
}
.ghmain {
  width: 1258px;
  display: flex;
  flex-direction: column;
  overflow: hidden;
  border-radius: 10px 0 0 10px;
}
.ghheader {
  height: 72px;
  flex: none;
  background: #24292f;
  color: #fff;
  display: flex;
  align-items: center;
  padding-left: 32px;
  font-size: 15px;
}
.gh-logo {
  color: #fff;
}
.gh-product {
  margin-left: 23px;
}
.gh-right {
  margin-left: auto;
  margin-right: 34px;
  display: flex;
  align-items: center;
}
.gh-search {
  width: 32px;
  height: 32px;
  border: 1px solid #6e7681;
  border-radius: 6px;
  display: flex;
  align-items: center;
  justify-content: center;
}
.gh-signin {
  margin-left: 24px;
  font-size: 14px;
}
.gh-signup {
  margin-left: 24px;
  font-size: 14px;
  width: 72px;
  height: 32px;
  border: 1px solid #bbb;
  border-radius: 6px;
  display: flex;
  align-items: center;
  justify-content: center;
}
.repohead {
  height: 110px;
  flex: none;
  background: #f6f8fa;
  border-bottom: 1px solid #d1d9e0;
  display: flex;
  flex-direction: column;
}
.repo-title {
  height: 60px;
  display: flex;
  align-items: center;
  padding-left: 31px;
}
.repo-name {
  margin-left: 8px;
  color: #0969da;
  font-size: 20px;
}
.star-btn {
  margin-left: auto;
  margin-right: 35px;
  width: 60px;
  height: 28px;
  border: 1px solid #d1d9e0;
  border-radius: 6px;
  display: flex;
  align-items: center;
  justify-content: flex-end;
  padding-right: 4px;
}
.star-btn b {
  font-weight: 400;
  background: #e6eaef;
  border-radius: 10px;
  padding: 1px 6px;
}
.repo-tabs {
  display: flex;
  align-items: center;
  height: 32px;
  padding-left: 32px;
  position: relative;
}
.code-tab {
  display: flex;
  align-items: center;
  gap: 8px;
  font-size: 14px;
  width: 72px;
  height: 50px;
  padding-left: 8px;
  padding-top: 2px;
  margin-top: 19px;
  padding-bottom: 19px;
  border-bottom: 2px solid #fd8c73;
}
.issue-ico {
  margin-left: 16px;
}
.ghbody {
  flex: 1;
  display: flex;
  justify-content: space-between;
  min-height: 0;
}
.filetree {
  width: 300px;
  padding: 16px 0 0 15px;
}
.files-head {
  display: flex;
  align-items: center;
  gap: 8px;
  font-size: 16px;
}
.panel-btn {
  width: 32px;
  height: 32px;
  border-radius: 6px;
  background: #eff2f5;
  display: flex;
  align-items: center;
  justify-content: center;
}
.branch, .gotofile {
  display: flex;
  align-items: center;
  margin-top: 17px;
  height: 32px;
  width: 280px;
  padding-left: 12px;
  border: 1px solid #d1d9e0;
  border-radius: 6px;
  font-size: 14px;
}
.branch {
  background: #f6f8fa;
  gap: 8px;
  padding-left: 14px;
}
.gotofile {
  margin-top: 7px;
  gap: 8px;
  color: #59636e;
}
.tree-row {
  height: 32px;
  display: flex;
  align-items: center;
  font-size: 14px;
  padding-left: 8px;
  position: relative;
}
.gotofile + .tree-row {
  margin-top: 12px;
}
.tree-chev {
  color: #59636e;
  margin-right: 12px;
}
.tree-chev.down {
  transform: rotate(90deg);
}
.tree-row span {
  margin-left: 8px;
}
.tree-row.file {
  padding-left: 34px;
}
.tree-row.file span {
  margin-left: 8px;
}
.tree-row.current {
  background: #eff2f5;
  border-radius: 6px;
}
.tree-row.current::before {
  content: "";
  position: absolute;
  left: -8px;
  top: 4px;
  width: 4px;
  height: 24px;
  background: #0969da;
  border-radius: 2px;
}
.ghside {
  width: 90px;
  margin-right: 16px;
  padding-top: 16px;
  display: flex;
  flex-direction: column;
  align-items: flex-end;
}
.more-btn {
  width: 32px;
  height: 32px;
  background: #f6f8fa;
  border: 1px solid #d1d9e0;
  border-radius: 6px;
  display: flex;
  align-items: center;
  justify-content: center;
}
.history-box {
  margin-top: 17px;
  width: 90px;
  height: 45px;
  border: 1px solid #d1d9e0;
  border-left: 0;
  border-radius: 0 6px 6px 0;
  display: flex;
  align-items: center;
  gap: 4px;
  padding-left: 8px;
  font-size: 13px;
}
.file-box {
  margin-top: 16px;
  width: 90px;
  height: 67px;
  border: 1px solid #d1d9e0;
  border-left: 0;
  border-radius: 0 6px 6px 0;
}
.file-actions {
  height: 45px;
  background: #f6f8fa;
  border-bottom: 1px solid #d1d9e0;
  display: flex;
  align-items: center;
  justify-content: flex-end;
  padding-right: 7px;
}
.edit-btn {
  width: 27px;
  height: 28px;
  background: #eaedf1;
  border-radius: 6px 0 0 6px;
  display: flex;
  align-items: center;
  justify-content: center;
}
.edit-drop {
  width: 27px;
  height: 28px;
  border: 1px solid #d1d9e0;
  border-radius: 0 6px 6px 0;
  color: #59636e;
  display: flex;
  align-items: center;
  justify-content: center;
}
.pagescroll {
  flex: 1;
  background: #fff;
  display: flex;
  flex-direction: column;
  align-items: center;
  padding: 8px 1px 0 0;
  border-left: 1px solid #eee;
  color: #8a8a8a;
}
.pagethumb {
  margin-top: 6px;
  width: 8px;
  flex: 1;
  background: #8f8f8f;
  border-radius: 4px 4px 0 0;
}
.arrow-down {
  margin: 10px 0 14px;
}

/* explorer window */
.explorer {
  position: absolute;
  left: 150px;
  top: 45px;
  width: 785px;
  height: 591px;
  background: #fff;
  display: flex;
  flex-direction: column;
}
.ex-title {
  height: 32px;
  flex: none;
  display: flex;
  align-items: center;
  padding-left: 8px;
}
.ex-title > svg:nth-of-type(2) {
  margin-left: 11px;
}
.ex-title > svg:nth-of-type(3) {
  margin-left: 10px;
}
.ex-drop {
  margin-left: 8px;
}
.ex-sep {
  width: 1px;
  height: 14px;
  background: #ccc;
  margin-left: 7px;
}
.ex-drop + .ex-sep {
  margin-left: 8px;
}
.ex-sep + span {
  margin-left: 7px;
}
.ex-win, .ev-win {
  margin-left: auto;
  display: flex;
  align-items: center;
  width: 102px;
  justify-content: space-between;
}
.ex-win {
  margin-right: 18px;
}
.ex-tabs {
  height: 23px;
  flex: none;
  display: flex;
  align-items: center;
  border-bottom: 1px solid #dadbdc;
}
.ex-file {
  width: 56px;
  height: 23px;
  background: #0063b1;
  color: #fff;
  display: flex;
  align-items: center;
  justify-content: center;
}
.ex-home {
  width: 58px;
  height: 24px;
  background: #f5f6f7;
  border: 1px solid #dadbdc;
  border-bottom: 0;
  border-top: 0;
  display: flex;
  align-items: center;
  justify-content: center;
  margin-top: 1px;
}
.ex-tab {
  width: 58px;
  text-align: center;
}
.ex-help {
  margin-left: auto;
  margin-right: 4px;
  width: 16px;
  height: 16px;
  border-radius: 50%;
  background: #1b6ec2;
  color: #fff;
  font-weight: 700;
  display: flex;
  align-items: center;
  justify-content: center;
}
.ribbon {
  height: 92px;
  flex: none;
  background: #f5f6f7;
  border-bottom: 1px solid #dadbdc;
  display: flex;
  color: #6d6d6d;
}
.rb-group {
  width: 263px;
  border-right: 1px solid #dadbdc;
  display: flex;
  flex-direction: column;
  margin: 2px 0;
}
.rb-items {
  flex: 1;
  display: flex;
  min-height: 0;
}
.rb-big {
  display: flex;
  flex-direction: column;
  align-items: center;
  text-align: center;
  line-height: 13px;
  padding-top: 6px;
}
.rb-big span {
  margin-top: 13px;
}
.rb-big .dark {
  margin-top: 12px;
  color: #1a1a1a;
}
.rb-pin {
  width: 78px;
  margin-left: 0;
  padding-top: 10px;
}
.rb-copy {
  width: 30px;
  margin-left: 20px;
  padding-top: 7px;
}
.rb-paste {
  width: 30px;
  margin-left: 12px;
}
.rb-small {
  margin-left: 12px;
  padding-top: 4px;
  display: flex;
  flex-direction: column;
  white-space: nowrap;
}
.rb-line {
  height: 22px;
  display: flex;
  align-items: center;
  gap: 4px;
}
.rb-label {
  text-align: center;
  height: 18px;
  margin-left: 1px;
  padding-right: 0;
}
.rb-top {
  flex: 1;
  position: relative;
  height: 30px;
}
.rb-mini {
  position: absolute;
  top: 7px;
  display: flex;
  align-items: center;
  gap: 4px;
}
.mini-ico {
  width: 14px;
  height: 12px;
  background: #cdd6e6;
}
.rb-move {
  left: 9px;
}
.rb-del {
  left: 93px;
}
.rb-newf {
  left: 180px;
}
.rb-newi {
  left: 215px;
}
.rb-prop {
  left: 270px;
}
.rb-open {
  left: 315px;
}
.rb-sel {
  left: 388px;
  color: #222;
}
.ex-nav {
  height: 33px;
  flex: none;
  display: flex;
  align-items: center;
  padding-left: 12px;
  gap: 15px;
}
.ex-addr {
  margin-left: -8px;
  width: 500px;
  height: 22px;
  border: 1px solid #d9d9d9;
  display: flex;
  align-items: center;
  gap: 9px;
  padding-left: 2px;
}
.ex-addr .gt {
  color: #555;
  margin-right: 3px;
  margin-left: -2px;
}
.ex-main {
  height: 388px;
  flex: none;
  display: flex;
  padding-top: 2px;
}
.ex-tree {
  width: 140px;
  overflow: hidden;
}
.ex-row {
  height: 24px;
  display: flex;
  align-items: center;
  white-space: nowrap;
  overflow: hidden;
}
.ex-row span {
  margin-left: 4px;
}
.ex-row.l0 {
  padding-left: 41px;
}
.ex-row.l0 span {
  position: relative;
}
.ex-row.l1 {
  padding-left: 50px;
}
.ex-row.l1 span {
  margin-left: 6px;
}
.ex-row.l2 {
  padding-left: 58px;
}
.ex-row.l2 span {
  margin-left: 6px;
}
.ex-row.l3 {
  padding-left: 66px;
}
.ex-row.l3 span {
  margin-left: 6px;
}
.ex-row.l3b {
  padding-left: 64px;
}
.ex-row.l3b span {
  position: absolute;
  margin-left: 21px;
}
.ex-row.selected {
  background: #cccccc;
}
.ex-vscroll {
  width: 16px;
  background: #f0f0f0;
  display: flex;
  flex-direction: column;
  align-items: center;
  padding-top: 8px;
  height: 386px;
}
.ex-thumb {
  width: 100%;
  height: 75px;
  margin-top: 152px;
  margin-bottom: 135px;
  background: #cdcdcd;
}
.ex-list {
  flex: 1;
  display: flex;
  flex-direction: column;
  padding-left: 18px;
  position: relative;
  overflow: hidden;
}
.col-name {
  height: 26px;
  line-height: 26px;
  padding-left: 3px;
  color: #555;
}
.grp {
  height: 30px;
  display: flex;
  align-items: center;
  gap: 4px;
  font-size: 16px;
  color: #1f3a8a;
  white-space: nowrap;
  margin-left: -3px;
}
.item {
  height: 21px;
  display: flex;
  align-items: center;
  gap: 6px;
  padding-left: 8px;
  white-space: nowrap;
}
.zipitem {
  height: 25px;
  padding-left: 4px;
  margin-bottom: 1px;
}
.item.picked {
  border: 1px solid #99d1ff;
  margin-left: 0;
  padding-left: 7px;
}
.ex-hscroll {
  position: absolute;
  left: 6px;
  right: 0;
  bottom: 0;
  height: 14px;
  background: #f0f0f0;
  display: flex;
  align-items: center;
  padding-left: 3px;
}
.ex-hthumb {
  margin-left: 6px;
  flex: 1;
  height: 100%;
  background: #cdcdcd;
}
.ex-status {
  height: 22px;
  flex: none;
  display: flex;
  align-items: center;
  color: #444;
}
.st-a {
  margin-left: 14px;
}
.st-b {
  margin-left: 20px;
}
.st-c {
  margin-left: 6px;
}

/* event viewer window */
.evwin {
  position: absolute;
  left: 386px;
  top: 123px;
  width: 787px;
  height: 550px;
  background: #fff;
  border: 1px solid #6f6f6f;
  display: flex;
  flex-direction: column;
}
.ev-title {
  height: 28px;
  flex: none;
  display: flex;
  align-items: center;
  padding-left: 2px;
  padding-left: 3px;
}
.ev-title span {
  margin-left: 10px;
  margin-left: 6px;
}
.ev-win {
  margin-right: 17px;
}
.ev-menu {
  height: 24px;
  flex: none;
  display: flex;
  gap: 17px;
  align-items: center;
  padding-left: 11px;
  border-bottom: 1px solid #a0a0a0;
}
.ev-tools {
  height: 24px;
  flex: none;
  display: flex;
  align-items: center;
  padding-left: 5px;
  gap: 7px;
  border-bottom: 1px solid #f0f0f0;
}
.tool-sep {
  width: 1px;
  height: 19px;
  background: #c8c8c8;
}
.tool-on {
  width: 23px;
  height: 22px;
  background: #cce4f7;
  border: 1px solid #b4d4ee;
  display: flex;
  align-items: center;
  justify-content: center;
}
.tool-help {
  margin-left: 3px;
  margin-right: 2px;
}
.ev-panes {
  flex: 1;
  display: flex;
  background: #f0f0f0;
  padding-top: 5px;
  min-height: 0;
}
.ev-left {
  margin-left: 1px;
  width: 198px;
  background: #fff;
  border: 1px solid #a0a0a0;
  border-top: 1px solid #a0a0a0;
  display: flex;
  flex-direction: column;
}
.node-list {
  flex: 1;
  overflow: hidden;
  padding-top: 1px;
}
.node {
  height: 18px;
  display: flex;
  align-items: center;
  white-space: nowrap;
  padding-left: 9px;
}
.node span {
  margin-left: 4px;
}
.node-chev {
  color: #999;
  margin-right: 7px;
}
.node.plain {
  padding-left: 22px;
}
.node.root {
  padding-left: 3px;
  width: 132px;
  background: #cce4f7;
}
.node.root span {
  margin-left: 5px;
}
.left-scroll {
  height: 16px;
  flex: none;
  background: #f0f0f0;
  display: flex;
  align-items: center;
  padding: 0 7px;
  justify-content: space-between;
}
.left-thumb {
  width: 148px;
  height: 100%;
  margin-right: 10px;
  background: #cdcdcd;
}
.ev-mid {
  margin-left: 3px;
  width: 345px;
  display: flex;
  flex-direction: column;
  background: #fff;
  border-left: 1px solid #808080;
}
.mid-head {
  height: 23px;
  flex: none;
  background: #696969;
  color: #fff;
  font-weight: 700;
  display: flex;
  align-items: center;
  padding-left: 5px;
}
.mid-band {
  height: 27px;
  flex: none;
  margin-top: 2px;
  background: #8c8c8c;
  color: #fff;
  display: flex;
  padding-left: 18px;
  position: relative;
  align-items: center;
}
.band-title {
  font-size: 18px;
  font-weight: 300;
}
.band-note {
  position: absolute;
  right: 8px;
  bottom: 0;
  color: #eee;
}
.mid-body {
  flex: 1;
  padding: 10px 11px 0;
  min-height: 0;
}
.sec-head {
  height: 24px;
  border: 1px solid #666;
  border-bottom-color: #777;
  background: linear-gradient(#f2f2f2, #a6a6a6);
  display: flex;
  align-items: center;
  justify-content: space-between;
  padding: 0 7px 0 6px;
}
.sec-head svg {
  color: #222;
}
.sec-body {
  background: #eee;
  margin-bottom: 10px;
}
.overview {
  height: 55px;
  margin-bottom: 10px;
  display: flex;
  margin-top: 1px;
  position: relative;
}
.ov-ico {
  margin: 9px 0 0 12px;
}
.overview p {
  margin: 10px 0 0 12px;
  width: 250px;
  line-height: 15px;
}
.ov-scroll {
  margin-left: auto;
  width: 16px;
  background: #f0f0f0;
  display: flex;
  flex-direction: column;
  align-items: center;
  padding-top: 6px;
}
.ov-thumb {
  width: 100%;
  height: 18px;
  margin: 6px 0 9px;
  background: #cdcdcd;
}
.summary {
  height: 58px;
  padding: 9px 13px;
}
.listwrap {
  height: 58px;
  padding: 10px;
}
.lv {
  height: 38px;
  background: #fff;
  border: 1px solid #9a9a9a;
  display: flex;
  flex-direction: column;
  position: relative;
}
.lv-cols {
  height: 19px;
  flex: none;
  display: flex;
  overflow: hidden;
  line-height: 24px;
}
.lv-cols span {
  padding-left: 7px;
  border-right: 1px solid #e5e5e5;
}
.c1 {
  width: 150px;
}
.c2 {
  width: 75px;
}
.c3 {
  width: 70px;
  border-right: 0 !important;
}
.lv-spin {
  position: absolute;
  right: 6px;
  top: 4px;
}
.lv-scroll {
  flex: 1;
  background: #f0f0f0;
  display: flex;
  align-items: center;
  padding-left: 6px;
}
.lv-thumb {
  margin-left: 6px;
  height: 100%;
  background: #c8c8c8;
}
.lv-thumb.wide {
  width: 141px;
}
.lv-thumb.narrow {
  width: 116px;
}
.lv-right {
  margin-left: 129px;
}
.lv-right.short {
  margin-left: 143px;
}
.mid-foot {
  height: 13px;
  flex: none;
  background: #f5f5f5;
  border-top: 1px solid #ececec;
}
.ev-right {
  margin-left: 5px;
  width: 233px;
  background: #fff;
  border-left: 2px solid #6f6f6f;
  border-top: 2px solid #6f6f6f;
}
.act-title {
  height: 19px;
  background: #f0f0f0;
  font-weight: 700;
  display: flex;
  align-items: center;
  padding-left: 4px;
  color: #111;
}
.act-head {
  margin-top: 2px;
  height: 25px;
  background: linear-gradient(#c4d8ec, #9dbbdd);
  display: flex;
  align-items: center;
  justify-content: space-between;
  padding: 0 6px 0 6px;
}
.act {
  height: 25px;
  display: flex;
  align-items: center;
  position: relative;
  padding-left: 5px;
}
.act.tall {
  height: 24px;
}
.act > span {
  position: absolute;
  left: 30px;
}
.act.line::after {
  content: "";
  position: absolute;
  left: 4px;
  right: 5px;
  bottom: 0;
  height: 1px;
  background: #ececec;
}
.sub {
  position: absolute;
  right: 7px;
}
.ev-status {
  height: 23px;
  flex: none;
  background: #f0f0f0;
  border-top: 1px solid #d8d8d8;
}

.watermark {
  position: absolute;
  left: 1038px;
  top: 608px;
  display: flex;
  align-items: center;
  gap: 4px;
  font-family: "Liberation Sans", sans-serif;
  font-size: 50px;
  color: rgba(110, 110, 110, 0.2);
  opacity: 1;
}
.watermark span {
  display: block;
  width: 62px;
  transform: scaleX(0.8);
  transform-origin: left center;
}
.watermark svg {
  opacity: 0.2;
}

/* taskbar */
.taskbar {
  position: absolute;
  left: 0;
  top: 680px;
  width: 1280px;
  height: 40px;
  background: #07161f;
  display: flex;
  align-items: center;
}
.start {
  width: 48px;
  display: flex;
  justify-content: center;
}
.searchbox {
  width: 288px;
  height: 40px;
  background: #f3f3f3;
  display: flex;
  align-items: center;
  padding-left: 12px;
  gap: 11px;
  font-size: 15px;
  color: #333;
}
.task-btn {
  height: 40px;
  width: 48px;
  display: flex;
  align-items: center;
  justify-content: center;
}
.task-btn:nth-of-type(3) {
  margin-right: 1px;
}
.task-btn.app {
  position: relative;
  width: 48px;
  margin-left: 2px;
}
.task-btn.app::after {
  content: "";
  position: absolute;
  left: 4px;
  right: 4px;
  bottom: 0;
  height: 2px;
  background: #76b9ed;
}
.task-btn.active {
  background: #3a4852;
  border-bottom: 2px solid #76b9ed;
  margin-left: 1px;
}
.tray {
  margin-left: auto;
  display: flex;
  align-items: center;
  color: #fff;
  gap: 12px;
  padding-right: 24px;
}
.clock {
  display: flex;
  flex-direction: column;
  align-items: center;
  line-height: 19px;
  font-size: 12px;
  margin-left: 2px;
}
.notif {
  margin-left: 15px;
}
```
